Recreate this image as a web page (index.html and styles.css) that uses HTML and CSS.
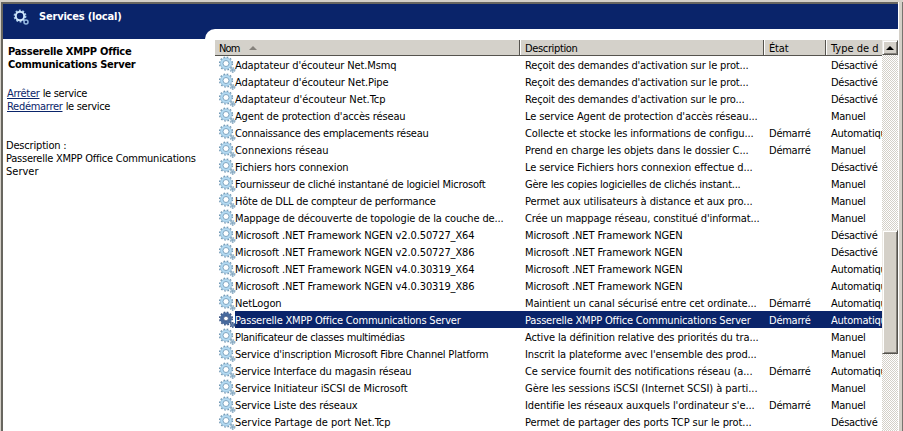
FILE: index.html
```html
<!DOCTYPE html>
<html lang="fr">
<head>
<meta charset="utf-8">
<title>Services (local)</title>
<link rel="stylesheet" href="styles.css">
</head>
<body>
<svg width="0" height="0" class="defs">
  <symbol id="gear" viewBox="0 0 17 17">
    <circle cx="7" cy="7.5" r="6.4" fill="none" stroke="#7299b5" stroke-width="1.5" stroke-dasharray="1.6 1.75"/>
    <circle cx="7" cy="7.5" r="4.4" fill="none" stroke="#b3daf2" stroke-width="2.8"/>
    <circle cx="7" cy="7.5" r="5.6" fill="none" stroke="#86aecb" stroke-width=".6"/>
    <circle cx="7" cy="7.5" r="3" fill="#fff" stroke="#6f9ab9" stroke-width=".9"/>
    <circle cx="13.6" cy="14" r="2" fill="#b4d5e9" stroke="#93b0c5" stroke-width="1.8" stroke-dasharray="1.3 .8"/>
    <circle cx="13.6" cy="14" r="1" fill="#86a5bc"/>
  </symbol>
  <symbol id="gear-dark" viewBox="0 0 17 17">
    <circle cx="7" cy="7.5" r="6.2" fill="none" stroke="#3d5685" stroke-width="1.7" stroke-dasharray="1.7 1.55"/>
    <circle cx="7" cy="7.5" r="4.2" fill="none" stroke="#486a9d" stroke-width="3.4"/>
    <circle cx="7" cy="7.5" r="2.4" fill="#fff" stroke="#2c4779" stroke-width=".9"/>
    <circle cx="13.6" cy="14" r="2.1" fill="#6280ad" stroke="#3d5685" stroke-width="1.6" stroke-dasharray="1.3 .8"/>
  </symbol>
</svg>
<div class="window">
  <div class="pane">
    <header class="banner">
      <svg class="logo" viewBox="0 0 16 16">
        <circle cx="7" cy="7" r="5.5" fill="none" stroke="#a9cbec" stroke-width="1.8" stroke-dasharray="1.9 1.55"/>
        <circle cx="7" cy="7" r="4.2" fill="none" stroke="#cfe6fa" stroke-width="2"/>
        <circle cx="13" cy="13" r="2" fill="none" stroke="#94b8e0" stroke-width="1.5"/>
      </svg>
      <span class="t" data-w="82">Services (local)</span>
    </header>
    <div class="content">
      <aside class="details">
        <h1><span class="t" data-w="122">Passerelle XMPP Office</span><br><span class="t" data-w="127">Communications Server</span></h1>
        <p class="actions"><a class="t" data-w="32">Arrêter</a> <span class="t" data-w="44">le service</span><br><a class="t" data-w="55">Redémarrer</a> <span class="t" data-w="44">le service</span></p>
        <p class="about"><span class="t" data-w="60">Description :</span><br><span class="t" data-w="189">Passerelle XMPP Office Communications</span><br><span class="t" data-w="32">Server</span></p>
      </aside>
      <main class="list">
        <div class="table">
          <div class="row head">
            <div><span class="t" data-w="20">Nom</span><i class="sort"></i></div>
            <div><span class="t" data-w="52">Description</span></div>
            <div><span class="t" data-w="19">État</span></div>
            <div><span class="t" data-w="47">Type de d</span></div>
          </div>
          <div id="rows"></div>
        </div>
        <div class="scroll"><div class="up"><i></i></div><div class="thumb"></div></div>
      </main>
    </div>
  </div>
  <div class="edge"></div>
</div>
<script src="app.js"></script>
</body>
</html>
```
FILE: styles.css
```css
* { box-sizing: border-box; }
body { margin: 0; width: 903px; height: 431px; overflow: hidden; background: #fff; color: #000; font: 11px/13px "DejaVu Sans Condensed", "DejaVu Sans", sans-serif; }
.defs { display: block; height: 0; }
.window { display: flex; height: 431px; border-top: 2px solid #d4d0c8; border-left: 1px solid #d4d0c8; }
.pane { flex: 1; border-top: 2px solid #68665f; border-left: 2px solid #68665f; display: flex; flex-direction: column; min-width: 0; background: #0a246a; }
.edge { width: 5px; border-left: 1px solid #fff; background: linear-gradient(90deg, #d4d0c8 3px, #77746f 3px); }
.banner { height: 25px; display: flex; align-items: center; gap: 10px; padding-left: 10px; color: #fff; font-weight: bold; flex: none; }
.logo { width: 16px; height: 16px; }
.t { display: inline-block; white-space: pre; }
.content { flex: 1; display: flex; min-height: 0; }
.details { width: 202px; margin-top: 10px; background: #fff; padding: 6px 3px; white-space: nowrap; }
h1 { margin: 0 0 16px 2px; font-size: 11px; line-height: 13px; }
p { margin: 0; }
.actions { padding-left: 1px; }
.about { margin-top: 26px; }
a { color: #0a246a; text-decoration: underline; }
.list { flex: 1; display: flex; background: #fff; border-top-left-radius: 10px; padding: 11px 0 0 10px; min-width: 0; }
.table { width: 667px; overflow: hidden; }
.row { display: grid; grid-template-columns: 305px 244px 62px 70px; height: 17px; line-height: 19px; }
.row > div { padding-left: 5px; overflow: hidden; white-space: nowrap; }
.row > .name { display: flex; padding-left: 4px; }
.name svg { width: 17px; height: 17px; flex: none; }
.name .label { flex: 1; margin-left: -1px; }
.selected { color: #fff; background: linear-gradient(90deg, #fff 20px, #0a246a 20px); }
.head { height: 16px; line-height: 17px; background: #d4d1ca; border-bottom: 1px solid #55534e; }
.head > div { border-right: 1px solid #55534e; box-shadow: inset 1px 0 #fff; }
.head > div:first-child { box-shadow: none; padding-left: 4px; }
.sort { display: inline-block; margin: 0 0 2px 9px; border: 4px solid transparent; border-top: 0; border-bottom-color: #85827c; }
.scroll { width: 16px; background: repeating-conic-gradient(#fff 0 25%, #d4d0c8 0 50%) 0 0 / 2px 2px; }
.up, .thumb { background: #d4d0c8; border: 1px solid; border-color: #eceae5 #55534e #55534e #eceae5; box-shadow: inset 1px 1px #fff, inset -1px -1px #85827c; }
.up { height: 15px; display: flex; align-items: center; justify-content: center; }
.up i { border: 4px solid transparent; border-top: 0; border-bottom-color: #000; }
.thumb { height: 124px; margin-top: 175px; }
```
FILE: app.js
```js
// [name, name width, description, description width, state, start type]
const D = 'Désactivé', M = 'Manuel', A = 'Automatique', S = 'Démarré';
const services = [
  ["Adaptateur d'écouteur Net.Msmq", 161, "Reçoit des demandes d'activation sur le prot...", 223, '', D],
  ["Adaptateur d'écouteur Net.Pipe", 153, "Reçoit des demandes d'activation sur le prot...", 223, '', D],
  ["Adaptateur d'écouteur Net.Tcp", 150, "Reçoit des demandes d'activation sur le pro...", 219, '', D],
  ["Agent de protection d'accès réseau", 170, "Le service Agent de protection d'accès réseau...", 232, '', M],
  ["Connaissance des emplacements réseau", 193, "Collecte et stocke les informations de configu...", 228, S, A],
  ["Connexions réseau", 93, "Prend en charge les objets dans le dossier C...", 223, S, M],
  ["Fichiers hors connexion", 113, "Le service Fichiers hors connexion effectue d...", 227, '', D],
  ["Fournisseur de cliché instantané de logiciel Microsoft", 250, "Gère les copies logicielles de clichés instant...", 215, '', M],
  ["Hôte de DLL de compteur de performance", 200, "Permet aux utilisateurs à distance et aux pro...", 227, '', M],
  ["Mappage de découverte de topologie de la couche de...", 268, "Crée un mappage réseau, constitué d'informat...", 234, '', M],
  ["Microsoft .NET Framework NGEN v2.0.50727_X64", 239, "Microsoft .NET Framework NGEN", 157, '', D],
  ["Microsoft .NET Framework NGEN v2.0.50727_X86", 239, "Microsoft .NET Framework NGEN", 157, '', D],
  ["Microsoft .NET Framework NGEN v4.0.30319_X64", 239, "Microsoft .NET Framework NGEN", 157, '', A],
  ["Microsoft .NET Framework NGEN v4.0.30319_X86", 239, "Microsoft .NET Framework NGEN", 157, '', A],
  ["NetLogon", 46, "Maintient un canal sécurisé entre cet ordinate...", 231, S, A],
  ["Passerelle XMPP Office Communications Server", 225, "Passerelle XMPP Office Communications Server", 225, S, A],
  ["Planificateur de classes multimédias", 169, "Active la définition relative des priorités du tra...", 233, '', M],
  ["Service d'inscription Microsoft Fibre Channel Platform", 253, "Inscrit la plateforme avec l'ensemble des prod...", 231, '', M],
  ["Service Interface du magasin réseau", 176, "Ce service fournit des notifications réseau (a...", 227, S, A],
  ["Service Initiateur iSCSI de Microsoft", 172, "Gère les sessions iSCSI (Internet SCSI) à parti...", 232, '', M],
  ["Service Liste des réseaux", 122, "Identifie les réseaux auxquels l'ordinateur s'e...", 229, S, M],
  ["Service Partage de port Net.Tcp", 155, "Permet de partager des ports TCP sur le prot...", 226, '', D]
];
const widths = { [D]: 46, [M]: 34, [A]: 61, [S]: 41 };
const span = (s, w) => s ? `<span class="t" data-w="${w}">${s}</span>` : '';
document.getElementById('rows').innerHTML = services.map((r, i) => `
  <div class="row${i === 15 ? ' selected' : ''}">
    <div class="name"><svg><use href="#gear${i === 15 ? '-dark' : ''}"/></svg><div class="label">${span(r[0], r[1])}</div></div>
    <div>${span(r[2], r[3])}</div><div>${span(r[4], widths[r[4]])}</div><div>${span(r[5], widths[r[5]])}</div>
  </div>`).join('');
document.querySelectorAll('.t').forEach(el => {
  const gap = (Number(el.dataset.w) + 0.5 - el.getBoundingClientRect().width) / el.textContent.length;
  el.style.letterSpacing = gap.toFixed(3) + 'px';
});
```
